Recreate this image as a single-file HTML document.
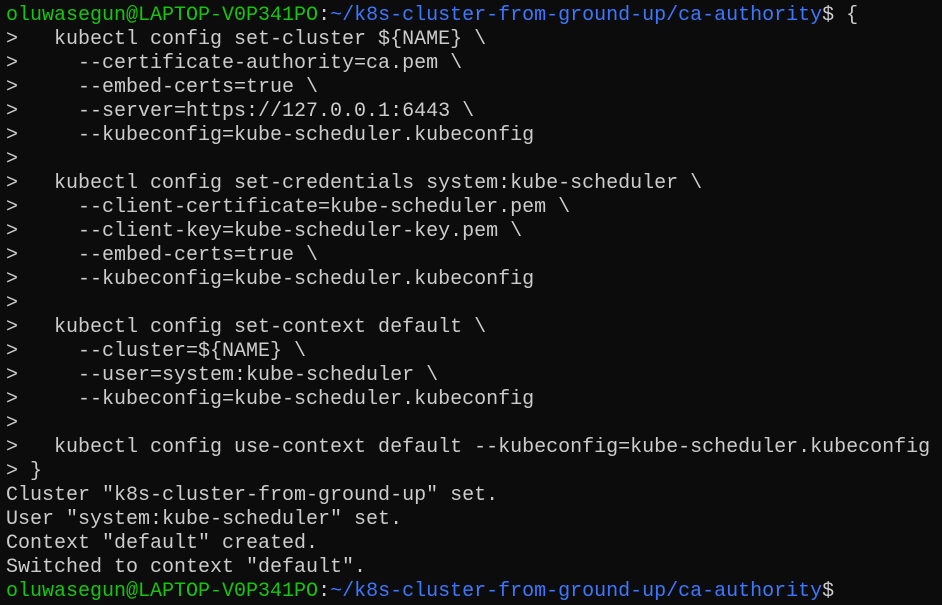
<!DOCTYPE html>
<html><head><meta charset="utf-8"><style>
html,body{margin:0;padding:0;background:#0c0c0c;width:942px;height:605px;overflow:hidden}
pre{margin:0;padding:4px 0 0 6px;font-family:"Liberation Mono","DejaVu Sans Mono",monospace;font-size:20px;line-height:24px;color:#cccccc;white-space:pre}
.g{color:#16c60c}.b{color:#3b78ff}
</style></head><body><pre><span class="g">oluwasegun@LAPTOP-V0P341PO</span>:<span class="b">~/k8s-cluster-from-ground-up/ca-authority</span>$ {
>   kubectl config set-cluster ${NAME} \
>     --certificate-authority=ca.pem \
>     --embed-certs=true \
>     --server=https://127.0.0.1:6443 \
>     --kubeconfig=kube-scheduler.kubeconfig
>
>   kubectl config set-credentials system:kube-scheduler \
>     --client-certificate=kube-scheduler.pem \
>     --client-key=kube-scheduler-key.pem \
>     --embed-certs=true \
>     --kubeconfig=kube-scheduler.kubeconfig
>
>   kubectl config set-context default \
>     --cluster=${NAME} \
>     --user=system:kube-scheduler \
>     --kubeconfig=kube-scheduler.kubeconfig
>
>   kubectl config use-context default --kubeconfig=kube-scheduler.kubeconfig
> }
Cluster "k8s-cluster-from-ground-up" set.
User "system:kube-scheduler" set.
Context "default" created.
Switched to context "default".
<span class="g">oluwasegun@LAPTOP-V0P341PO</span>:<span class="b">~/k8s-cluster-from-ground-up/ca-authority</span>$</pre></body></html>
